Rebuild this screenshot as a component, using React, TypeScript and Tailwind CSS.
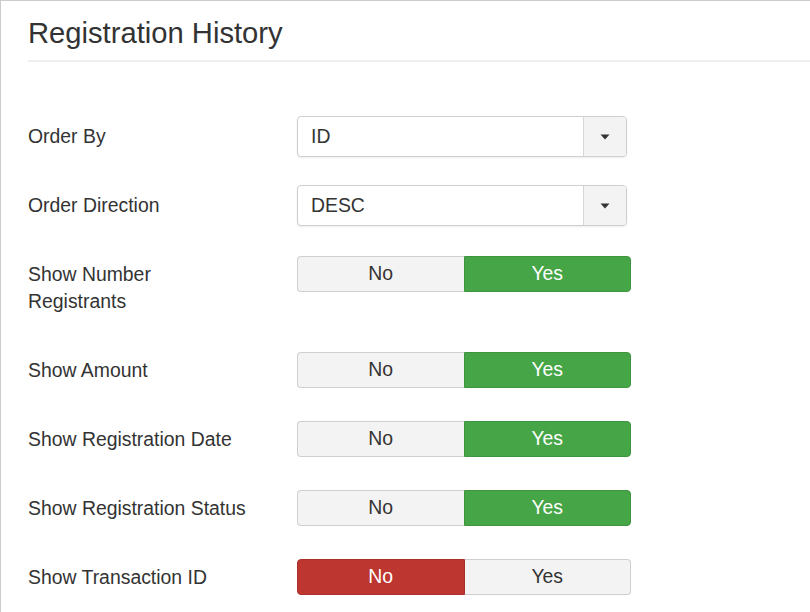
import React from "react";

const font = { fontFamily: '"Liberation Sans", Arial, sans-serif' };

const Select = ({ value }: { value: string }) => (
  <div className="flex h-[41px] w-[330px] rounded-[4px] border border-[#cfcfcf] bg-white shadow-[0_1px_2px_rgba(0,0,0,0.08)] overflow-hidden">
    <div className="flex-1 flex items-center pl-[13px] text-[19.4px] text-[#333]">{value}</div>
    <div className="w-[43px] flex items-center justify-center border-l border-[#d6d6d6] bg-[#f3f3f3]">
      <svg width="10" height="6" viewBox="0 0 10 6">
        <path d="M0.5 0.5h9L5 5.5z" fill="#333" />
      </svg>
    </div>
  </div>
);

const Toggle = ({ yes }: { yes: boolean }) => (
  <div className="flex h-[36px] w-[334px] text-[19.4px]">
    <div
      className={
        yes
          ? "flex-1 flex items-center justify-center rounded-l-[4px] border border-r-0 border-[#cfcfcf] bg-[#f3f3f3] text-[#333]"
          : "flex-1 flex items-center justify-center rounded-l-[4px] border border-[#a9302a] bg-[#bd362f] text-white"
      }
    >
      No
    </div>
    <div
      className={
        yes
          ? "flex-1 flex items-center justify-center rounded-r-[4px] border border-[#3f953f] bg-[#46a546] text-white"
          : "flex-1 flex items-center justify-center rounded-r-[4px] border border-l-0 border-[#cfcfcf] bg-[#f3f3f3] text-[#333]"
      }
    >
      Yes
    </div>
  </div>
);

export default function App() {
  return (
    <div style={font} className="w-[810px] h-[612px] overflow-hidden bg-white border-t border-l border-[#cccccc] text-[#333]">
      <div className="pl-[27px]">
        <h2 className="pt-[16px] text-[29.2px] leading-[32px] text-[#333]">Registration History</h2>
        <div className="mt-[11px] h-[2px] bg-[#eeeeee]" />

        <div className="mt-[54px] flex items-start">
          <div className="w-[269px] pt-[7px] text-[19.4px] leading-[27px]">Order By</div>
          <Select value="ID" />
        </div>

        <div className="mt-[28px] flex items-start">
          <div className="w-[269px] pt-[7px] text-[19.4px] leading-[27px]">Order Direction</div>
          <Select value="DESC" />
        </div>

        <div className="mt-[30px] flex items-start">
          <div className="w-[269px] pt-[4.5px] text-[19.4px] leading-[27px]">
            Show Number
            <br />
            Registrants
          </div>
          <Toggle yes />
        </div>

        <div className="mt-[37.5px] flex items-start">
          <div className="w-[269px] pt-[4.5px] text-[19.4px] leading-[27px]">Show Amount</div>
          <Toggle yes />
        </div>

        <div className="mt-[33px] flex items-start">
          <div className="w-[269px] pt-[4.5px] text-[19.4px] leading-[27px]">Show Registration Date</div>
          <Toggle yes />
        </div>

        <div className="mt-[33px] flex items-start">
          <div className="w-[269px] pt-[4.5px] text-[19.4px] leading-[27px]">Show Registration Status</div>
          <Toggle yes />
        </div>

        <div className="mt-[33px] flex items-start">
          <div className="w-[269px] pt-[4.5px] text-[19.4px] leading-[27px]">Show Transaction ID</div>
          <Toggle yes={false} />
        </div>
      </div>
    </div>
  );
}
